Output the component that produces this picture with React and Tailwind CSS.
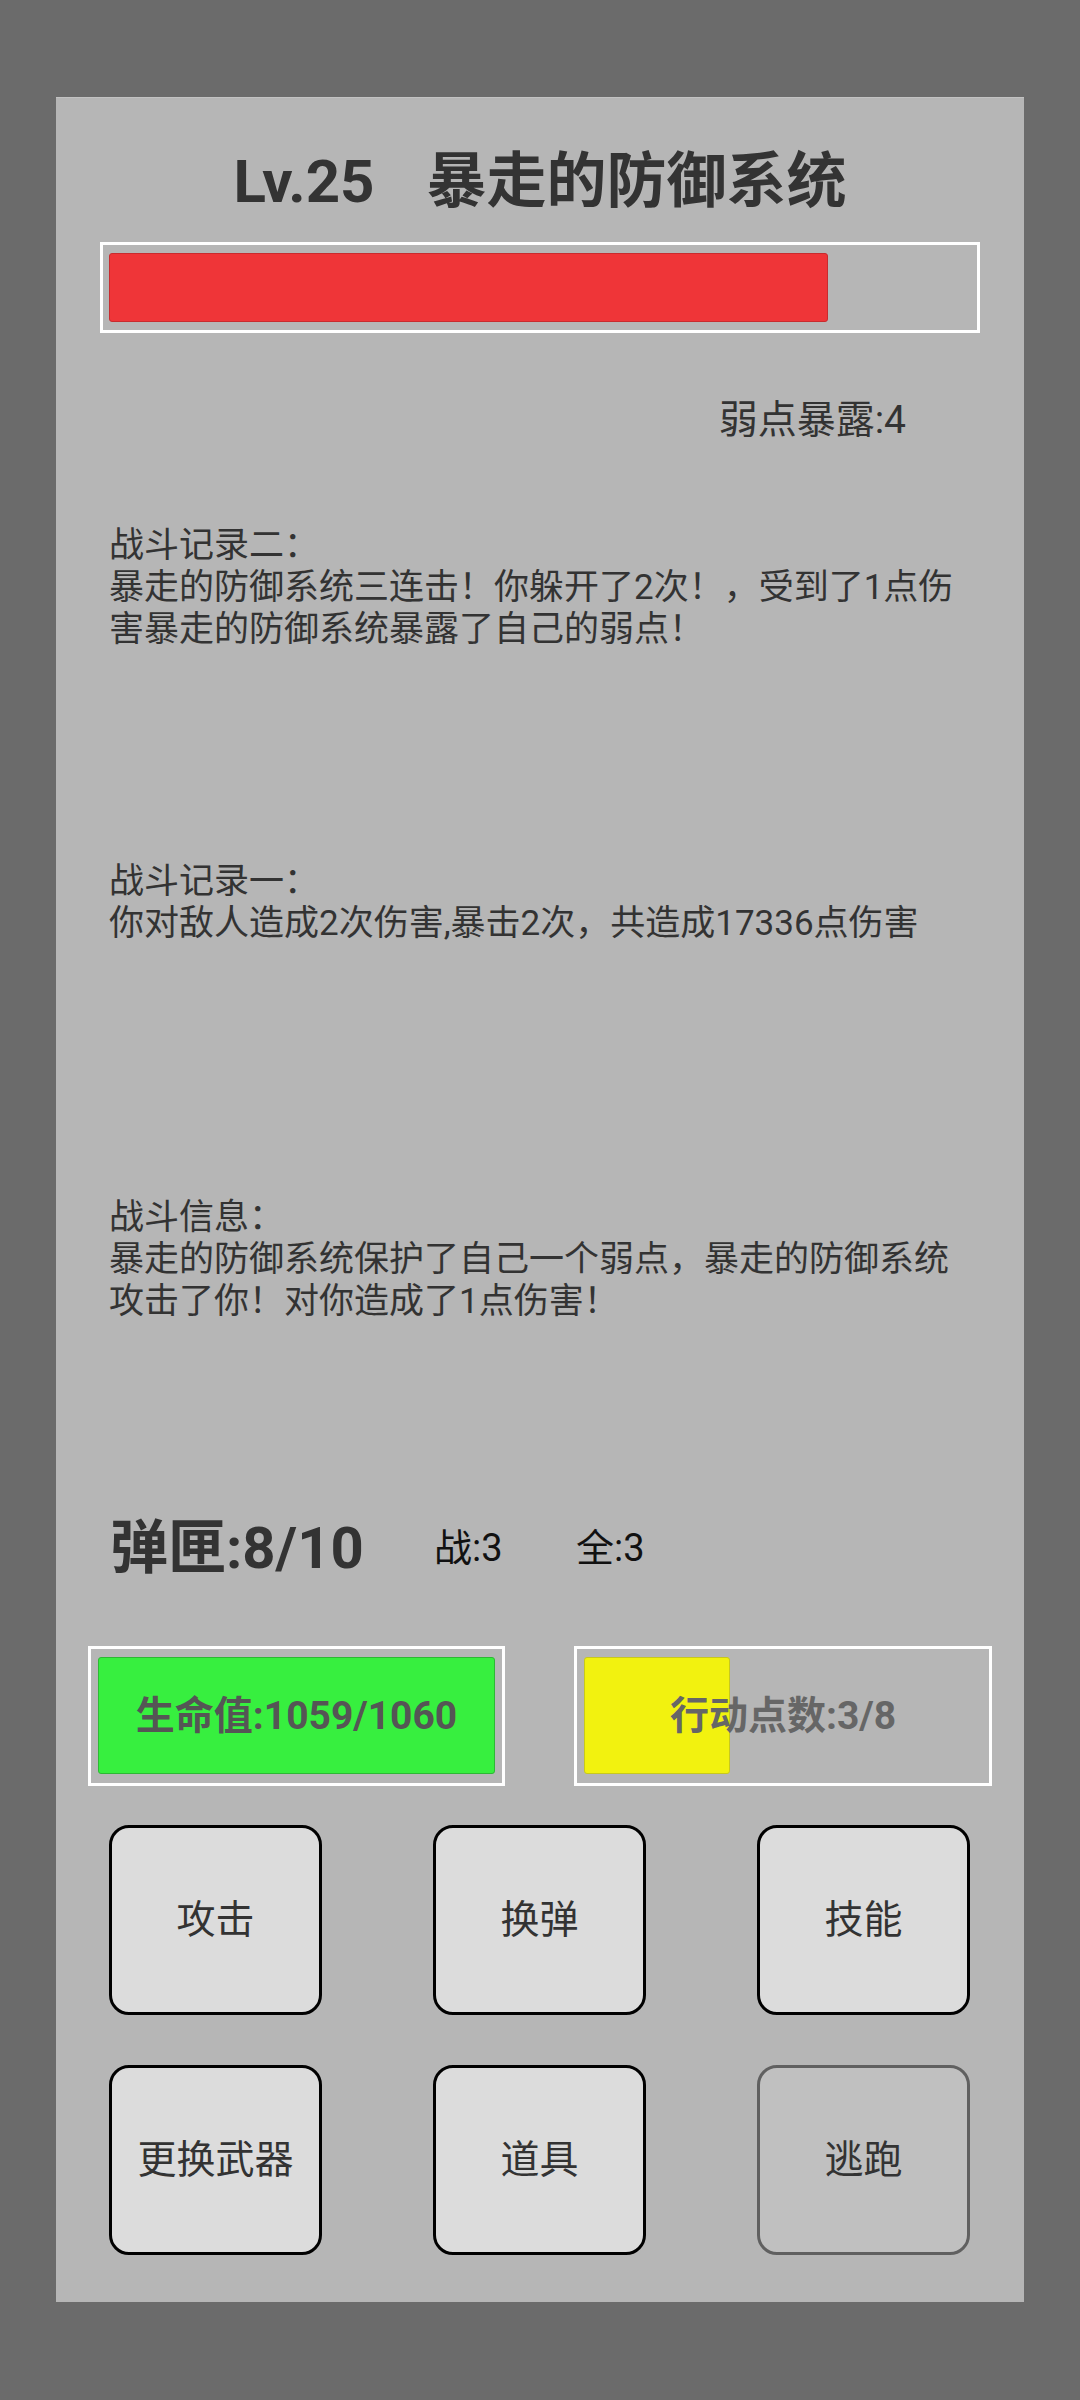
import React from "react";

const logs = [
  {
    title: "战斗记录二：",
    body: "暴走的防御系统三连击！你躲开了2次！，受到了1点伤害暴走的防御系统暴露了自己的弱点！",
  },
  {
    title: "战斗记录一：",
    body: "你对敌人造成2次伤害,暴击2次，共造成17336点伤害",
  },
  {
    title: "战斗信息：",
    body: "暴走的防御系统保护了自己一个弱点，暴走的防御系统攻击了你！对你造成了1点伤害！",
  },
];

const actions = ["攻击", "换弹", "技能", "更换武器", "道具"];

const App = () => {
  return (
    <div className="min-h-[2400px] bg-[#6b6b6b] px-[56px] pt-[97px] font-['Roboto','Noto_Sans_CJK_SC',sans-serif]">
      <div className="flex h-[2205px] flex-col bg-[#b6b6b6] border-t border-[#c2c2c2]">
        {/* boss name */}
        <div className="mt-[54px] flex h-[60px] items-center justify-center text-[60px] font-bold leading-none text-[#333]">
          <span>Lv.25</span>
          <span className="ml-[52px]">暴走的防御系统</span>
        </div>

        {/* boss hp */}
        <div className="ml-[44px] mt-[30px] h-[91px] w-[880px] border-[3px] border-white px-[6px] py-[8px]">
          <div className="h-full w-[719px] rounded-[3px] border border-[#c92b2e] bg-[#ef3538]" />
        </div>

        <div className="mt-[64px] flex justify-end pr-[118px] text-[39px] leading-[46px] text-[#333]">
          弱点暴露:4
        </div>

        {/* battle log */}
        <div className="mt-[82px] pl-[53px] text-[35px] leading-[42px] text-[#333]">
          {logs.map((log, i) => (
            <div key={i} className={i < 2 ? "h-[336px] w-[860px]" : "w-[860px]"}>
              <p>{log.title}</p>
              <p>{log.body}</p>
            </div>
          ))}
        </div>

        {/* ammo */}
        <div className="mt-[190px] flex h-[70px] items-center pl-[54px]">
          <span className="w-[324px] text-[58px] font-bold text-[#333]">弹匣:8/10</span>
          <span className="w-[142px] text-[38px] text-[#111]">战:3</span>
          <span className="text-[38px] text-[#111]">全:3</span>
        </div>

        {/* player bars */}
        <div className="mt-[63px] flex justify-between px-[32px]">
          <div className="relative h-[140px] w-[417px] border-[3px] border-white px-[7px] pb-[9px] pt-[8px]">
            <div className="h-full w-full rounded-[3px] border border-[#2db834] bg-[#37ef3f]" />
            <div className="absolute inset-0 flex items-center justify-center text-[39px] font-bold text-[#555]">
              生命值:1059/1060
            </div>
          </div>
          <div className="relative h-[140px] w-[418px] border-[3px] border-white px-[7px] pb-[9px] pt-[8px]">
            <div className="h-full w-[146px] rounded-[3px] border border-[#c8c81c] bg-[#f2f20f]" />
            <div className="absolute inset-0 flex items-center justify-center text-[39px] font-bold text-[#666]">
              行动点数:3/8
            </div>
          </div>
        </div>

        {/* actions */}
        <div className="mt-[39px] grid grid-cols-[213px_213px_213px] gap-x-[111px] gap-y-[50px] pl-[53px]">
          {actions.map((a) => (
            <button
              key={a}
              className="flex h-[190px] items-center justify-center rounded-[20px] border-[3px] border-black bg-[#dcdcdc] text-[39px] text-[#333]"
            >
              {a}
            </button>
          ))}
          <button className="flex h-[190px] items-center justify-center rounded-[20px] border-[3px] border-[#606060] bg-[#c0c0c0] text-[39px] text-[#333]">
            逃跑
          </button>
        </div>
      </div>
    </div>
  );
};

export default App;
